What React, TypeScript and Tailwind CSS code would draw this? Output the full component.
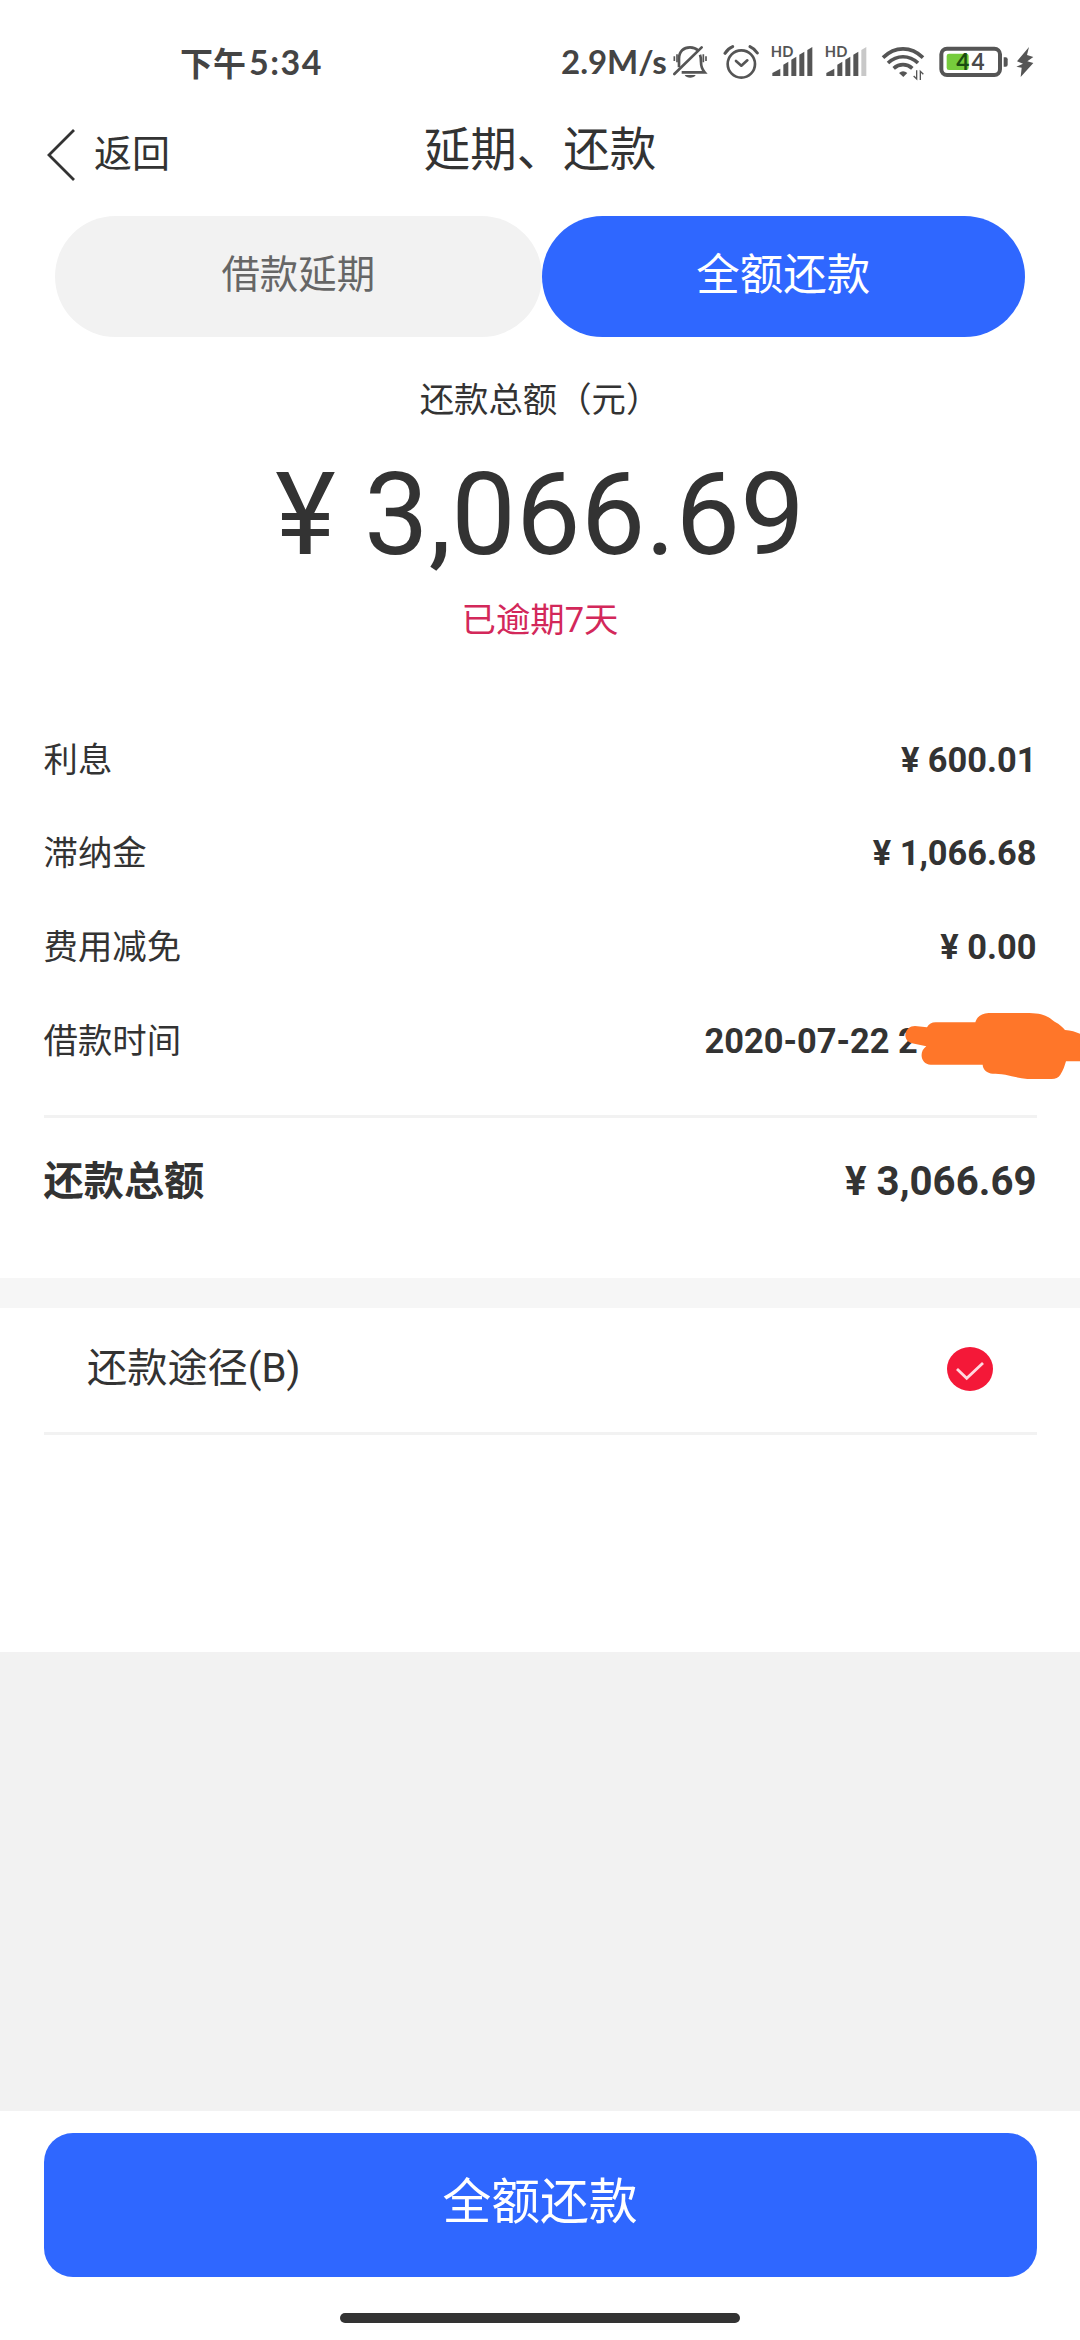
const details = [
  { label: "利息", value: "¥ 600.01" },
  { label: "滞纳金", value: "¥ 1,066.68" },
  { label: "费用减免", value: "¥ 0.00" },
];

function BellOffIcon() {
  return (
    <svg className="h-[70px] w-[36px]" viewBox="396 0 108 210" fill="none" stroke="#555" strokeWidth="8">
      <path d="M417 112V86c0-22 14-34 33-34 11 0 19 4 25 10" />
      <path d="M480 74c3 7 3 14 3 22 0 14 4 23 11 31H425" />
      <path d="M403 132l82-80" strokeLinecap="round" />
      <path d="M403 79v14M411 73v24M490 73v24M498 79v14" strokeWidth="5" />
      <path d="M434 135h33c-5 11-28 11-33 0z" fill="#555" stroke="none" />
    </svg>
  );
}

function AlarmIcon() {
  return (
    <svg className="h-[70px] w-[36px]" viewBox="548 0 108 210" fill="none" stroke="#555" strokeWidth="8">
      <circle cx="603" cy="102" r="41" />
      <path d="M587 93l16 14 18-16" strokeLinecap="round" strokeLinejoin="round" />
      <path d="M554 70c5-8 13-16 23-20M651 69c-5-8-13-15-22-19" strokeWidth="9" strokeLinecap="round" />
    </svg>
  );
}

function SignalIcon({ last }: { last: string }) {
  return (
    <svg className="h-[70px] w-[42px]" viewBox="104 0 126 210" fill="#555">
      <text x="103" y="80" fontFamily="Lato" fontWeight="700" fontSize="44" textLength="68">HD</text>
      <path d="M108 138v-9l24-13v22z" />
      <path d="M141 138v-34l15-9v43z" />
      <path d="M165 138V89l15-9v58z" />
      <path d="M189 138V74l15-9v73z" />
      <path d="M213 138V60l15-9v87z" fill={last} />
    </svg>
  );
}

function WifiIcon() {
  return (
    <svg className="h-[70px] w-[44px]" viewBox="273 0 132 210" fill="none" stroke="#555" strokeWidth="11">
      <path d="M279 83c36-35 84-35 120 0" />
      <path d="M294 99c27-25 63-25 90 0" />
      <path d="M311 115c17-15 39-15 56 0" />
      <path d="M327 129q12-11 25 0l-12 12z" fill="#555" stroke="none" />
      <path d="M380 121v26l-9-9M391 150v-26l9 9" strokeWidth="4" />
    </svg>
  );
}

function BatteryIcon() {
  return (
    <svg className="h-[70px] w-[70px]" viewBox="448 0 210 210">
      <rect x="455" y="56" width="176" height="79" rx="17" fill="none" stroke="#555" strokeWidth="12" />
      <rect x="471" y="71" width="66" height="49" rx="7" fill="#76cc3c" />
      <path d="M642 82h6q6 0 6 6v16q0 6-6 6h-6z" fill="#555" />
      <text x="500" y="121" fontFamily="Lato" fontWeight="700" fontSize="68" textLength="85" fill="#1b4d10">
        4<tspan fill="#4a4a4a">4</tspan>
      </text>
    </svg>
  );
}

function BoltIcon() {
  return (
    <svg className="h-[70px] w-[20px]" viewBox="675 0 60 210" fill="#555">
      <path d="M717 51l-36 43 18 7-20 9 16 3-3 28 38-42-18-5 18-13-19-6z" />
    </svg>
  );
}

function StatusBar() {
  return (
    <div className="flex h-[100px] items-start pt-[30px] pl-[180px] font-['Lato','Noto_Sans_CJK_SC',sans-serif] text-[#444]">
      <div className="flex h-[64px] w-[381px] items-center text-[33px] font-bold">
        <span className="font-['Noto_Sans_CJK_SC',sans-serif] leading-none font-bold">下午</span>
        <span className="pl-[3px] text-[34px] leading-none tracking-[1.5px]">5:34</span>
      </div>
      <span className="w-[111px] pt-[11px] text-[33px] leading-[40px] font-bold whitespace-nowrap">2.9M/s</span>
      <div className="flex">
        <BellOffIcon />
        <div className="w-[15px]" />
        <AlarmIcon />
        <div className="w-[12px]" />
        <SignalIcon last="#555" />
        <div className="w-[12px]" />
        <SignalIcon last="#c8c8c8" />
        <div className="w-[14px]" />
        <WifiIcon />
        <div className="w-[14px]" />
        <BatteryIcon />
        <div className="w-[6px]" />
        <BoltIcon />
      </div>
    </div>
  );
}

function NavBar() {
  return (
    <div className="grid h-[116px] grid-cols-[1fr_auto_1fr] items-start">
      <div className="flex items-center pt-[27px] pl-[46px]">
        <svg className="h-[54px] w-[30px]" viewBox="0 0 30 54" fill="none" stroke="#333" strokeWidth="2.8">
          <path d="M28 2L3 27l25 25" />
        </svg>
        <span className="pb-[1px] pl-[18px] text-[38px] leading-[54px]">返回</span>
      </div>
      <h1 className="pt-[20px] text-[46.5px] leading-[60px]">延期、还款</h1>
      <div />
    </div>
  );
}

function Scribble() {
  return (
    <svg className="absolute top-[14px] -right-[43px] h-[76px] w-[180px]" viewBox="720 924 540 228" fill="#ff7629">
      <path d="M736 1004c2-16 14-26 29-26l36 4c6-10 14-15 26-15h119c5-18 19-27 40-28h122c38 1 50 6 76 26 16 8 24 17 31 25 18 1 32 6 45 11v83h-42c-4 13-8 27-17 40-6 9-14 13-26 13h-73c-24-2-44-8-66-13-16-3-26-2-38-3-17-2-29-11-30-27H812c-28-1-38-37-13-55l-43-9c-13-4-20-13-20-26z" />
    </svg>
  );
}

export default function App() {
  return (
    <div className="flex h-[2340px] w-[1080px] flex-col overflow-hidden bg-white font-['Roboto','Noto_Sans_CJK_SC',sans-serif] text-[#333]">
      <StatusBar />
      <NavBar />

      <div className="flex h-[121px] shrink-0 px-[55px]">
        <button className="h-[121px] w-[487px] rounded-full bg-[#f2f2f2] pb-[3px] text-[38.4px] text-[#666]">借款延期</button>
        <button className="h-[121px] w-[484px] rounded-full bg-[#2f67ff] pb-[2px] text-[43.5px] text-white">全额还款</button>
      </div>

      <div className="flex h-[376px] shrink-0 flex-col items-center">
        <div className="mt-[43px] text-[34.4px] leading-[40px]">还款总额（元）</div>
        <div className="mt-[27px] text-[115px] leading-[136px]">¥ 3,066.69</div>
        <div className="mt-[17px] text-[34.4px] leading-[40px] text-[#d3285a]">已逾期7天</div>
      </div>

      <div className="shrink-0 px-[43.5px] text-[34.4px]">
        {details.map((item) => (
          <div key={item.label} className="flex h-[93.8px] items-center justify-between pt-[1px]">
            <span>{item.label}</span>
            <span className="font-bold">{item.value}</span>
          </div>
        ))}
        <div className="relative flex h-[93.8px] items-center justify-between pt-[1px]">
          <span>借款时间</span>
          <span className="w-[332px] font-bold">2020-07-22 2</span>
          <Scribble />
        </div>
        <div className="mt-[27px] h-[3px] bg-[#f2f2f2]" />
        <div className="flex h-[127px] items-center justify-between text-[40.2px] font-bold">
          <span>还款总额</span>
          <span>¥ 3,066.69</span>
        </div>
      </div>

      <div className="mt-[32.8px] h-[30px] shrink-0 bg-[#f6f6f6]" />

      <div className="h-[344px] shrink-0 px-[43.5px]">
        <div className="flex h-[127px] items-center justify-between border-b-3 border-[#f2f2f2] px-[43.5px] text-[40.2px]">
          <span className="pb-[2px]">还款途径(B)</span>
          <svg className="mb-[2px] h-[44px] w-[46px]" viewBox="0 0 46 44">
            <ellipse cx="23" cy="22" rx="23" ry="22" fill="#f41838" />
            <path d="M10 22l9.7 9.3 16.3-15.3" fill="none" stroke="#ffd9e0" strokeWidth="2.8" />
          </svg>
        </div>
      </div>

      <div className="grow bg-[#f2f2f2]" />

      <div className="flex h-[229px] shrink-0 flex-col items-center px-[43.5px] pt-[22px]">
        <button className="h-[143.5px] w-full rounded-[29px] bg-[#2f67ff] pb-[5px] text-[48.8px] text-white">全额还款</button>
        <div className="mt-[36.5px] h-[10px] w-[400px] rounded-full bg-[#333]" />
      </div>
    </div>
  );
}
